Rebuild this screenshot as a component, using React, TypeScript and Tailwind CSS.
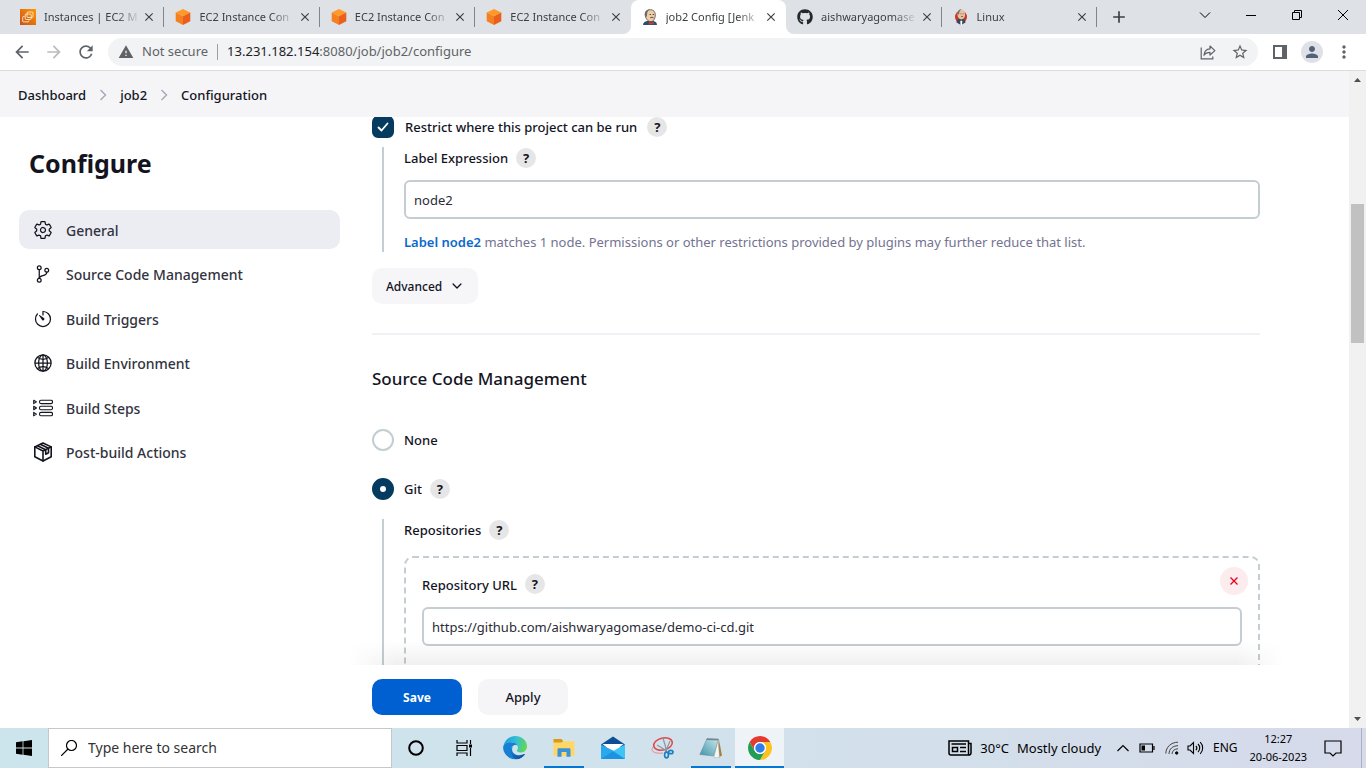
import React from "react";
import { FaGithub } from "react-icons/fa";
import {
  IoGitBranchOutline,
  IoGlobeOutline,
  IoSettingsOutline,
  IoTimerOutline,
  IoChevronDown,
} from "react-icons/io5";
import { MdArrowBack, MdArrowForward, MdRefresh, MdWarning, MdStarOutline, MdPerson, MdMoreVert, MdClose, MdAdd } from "react-icons/md";

/* ---------- Browser icons ---------- */

function Ec2Favicon() {
  return (
    <svg viewBox="0 0 16 16" className="size-4 shrink-0">
      <defs>
        <linearGradient id="ec2" x1="0" y1="1" x2="1" y2="0">
          <stop offset="0" stopColor="#c8511b" />
          <stop offset="1" stopColor="#ff9900" />
        </linearGradient>
      </defs>
      <rect width="16" height="16" fill="url(#ec2)" />
      <g fill="none" stroke="#ffe9d0" strokeWidth=".9">
        <rect x="7" y="3" width="6" height="5.500" rx="1" />
        <rect x="5.200" y="5" width="6" height="5.500" rx="1" />
        <path d="M4.500 7.500H3.300a.6.600 0 0 0-.6.600v4.200a.6.600 0 0 0 .6.600h4.900a.6.600 0 0 0 .6-.6V11.500" />
      </g>
    </svg>
  );
}

function CubeFavicon() {
  return (
    <svg viewBox="0 0 16 16" className="size-4 shrink-0">
      <path d="M8 0 15.300 3.600 8 7.300.7 3.600z" fill="#ff9a29" />
      <path d="M.7 3.600 8 7.300V16L.7 12.300z" fill="#f58021" />
      <path d="M15.300 3.600 8 7.300V16l7.300-3.700z" fill="#ea5f1b" />
    </svg>
  );
}

function JenkinsFavicon() {
  return (
    <svg viewBox="0 0 16 16" className="size-4 shrink-0">
      <path d="M1 16c0-2.600 2.300-3.800 5-4.300h5c2.600.7 4 2 4 4.300z" fill="#2f4f66" />
      <path d="M3.200 5.200C3.200 2 5.400.7 8.300.7c3.200 0 5 2 5 5.100 0 3.500-1.600 6.800-4.500 6.800-3.200 0-5.600-3.400-5.600-7.400z" fill="#eccdab" stroke="#5b4a40" strokeWidth=".8" />
      <path d="M3 6.500C2.300 3 4.300.6 7.800.4 5.800 1.700 5 3.300 5.100 5.600L4.700 8z" fill="#6e6a66" />
      <path d="M7.600 5.500h1.300M10.700 5.500h1.300M8.300 8.800c1-.6 2.300-.6 3.200.1" stroke="#3c2f28" strokeWidth=".9" fill="none" />
      <path d="m6.800 13 2.300.8 2.700-.8v2.600l-2.500-.7-2.500.9z" fill="#d33833" />
    </svg>
  );
}

function LinuxFavicon() {
  return (
    <svg viewBox="0 0 16 16" className="size-4 shrink-0">
      <ellipse cx="8" cy="8" rx="6" ry="6.500" fill="#c8372d" />
      <path d="M3.500 13.500c0-2.500 2-4 4.500-4s4.500 1.500 4.500 4L8 16z" fill="#34495c" />
      <ellipse cx="8.300" cy="5.500" rx="3.800" ry="5" fill="#e3c3a4" />
      <path d="M4.500 5C4.500 1.800 6 .3 8.500.3 6.700 1.500 6.300 3 6 5.500z" fill="#7a6b62" />
      <path d="m7.300 12 1-.4 1 .4L9 16H7.500z" fill="#fff" />
      <path d="M7.500 4.800h1M9.700 4.800h1M8 7.500h2" stroke="#6e5244" strokeWidth=".8" />
    </svg>
  );
}

const tabs = [
  { title: "Instances | EC2 M", icon: <Ec2Favicon /> },
  { title: "EC2 Instance Con", icon: <CubeFavicon /> },
  { title: "EC2 Instance Con", icon: <CubeFavicon /> },
  { title: "EC2 Instance Con", icon: <CubeFavicon /> },
  { title: "job2 Config [Jenk", icon: <JenkinsFavicon />, active: true },
  { title: "aishwaryagomase", icon: <FaGithub className="size-4 shrink-0 text-[#24292f]" /> },
  { title: "Linux", icon: <LinuxFavicon /> },
];

function TabStrip() {
  return (
    <div className="flex h-[34px] shrink-0 bg-[#dee1e6] pl-[9px] text-[11px] text-[#3c4043]">
      <div className="flex w-[1088px]">
        {tabs.map((tab, i) => {
          const divided = !tab.active && !tabs[i + 1]?.active;
          return (
            <div
              key={i}
              className={
                "flex min-w-0 flex-1 items-center pl-[11px] " + (tab.active ? "relative rounded-t-lg bg-white" : "")
              }
            >
              {tab.active && (
                <>
                  <svg viewBox="0 0 8 8" className="pointer-events-none absolute -left-2 bottom-0 size-2">
                    <path d="M0 8a8 8 0 0 0 8-8v8z" fill="#fff" />
                  </svg>
                  <svg viewBox="0 0 8 8" className="pointer-events-none absolute -right-2 bottom-0 size-2">
                    <path d="M8 8a8 8 0 0 1-8-8v8z" fill="#fff" />
                  </svg>
                </>
              )}
              {tab.icon}
              <span className="ml-2 min-w-0 flex-1 whitespace-nowrap [mask-image:linear-gradient(to_right,black_72px,transparent_96px)]">
                {tab.title}
              </span>
              <button aria-label="Close tab" className="mr-1.5 grid size-4 shrink-0 place-items-center">
                <MdClose className="size-3.5 text-[#3c4043]" />
              </button>
              <span className={divided ? "h-5 w-px bg-[#80868b]" : "h-5 w-px"} />
            </div>
          );
        })}
      </div>
      <button aria-label="New tab" className="ml-2.5 grid w-6 place-items-center">
        <MdAdd className="size-5" />
      </button>
      <div className="ml-auto flex h-[29px] items-center text-black">
        <button aria-label="Search tabs" className="grid w-[46px] place-items-center">
          <svg viewBox="0 0 12 8" className="h-2 w-3" fill="none" stroke="currentColor">
            <path d="M1 1.500 6 6.500l5-5" />
          </svg>
        </button>
        <button aria-label="Minimize" className="grid w-[46px] place-items-center">
          <svg viewBox="0 0 10 10" className="size-2.5" stroke="currentColor">
            <path d="M0 5.500h10" />
          </svg>
        </button>
        <button aria-label="Restore" className="grid w-[46px] place-items-center">
          <svg viewBox="0 0 10 10" className="size-2.5" fill="none" stroke="currentColor">
            <path d="M.5 2.500h7v7h-7zM2.500 2.500v-2h7v7h-2" />
          </svg>
        </button>
        <button aria-label="Close" className="grid w-[46px] place-items-center">
          <svg viewBox="0 0 10 10" className="size-2.5" stroke="currentColor">
            <path d="m0 0 10 10M10 0 0 10" />
          </svg>
        </button>
      </div>
    </div>
  );
}

function Toolbar() {
  return (
    <div className="flex h-[37px] shrink-0 items-center border-b border-[#dadce0] bg-white text-[#5f6368]">
      <button aria-label="Back" className="ml-3 grid size-5 place-items-center">
        <MdArrowBack className="size-5" />
      </button>
      <button aria-label="Forward" className="ml-3 grid size-5 place-items-center text-[#babcbe]">
        <MdArrowForward className="size-5" />
      </button>
      <button aria-label="Reload" className="ml-3 grid size-5 place-items-center">
        <MdRefresh className="size-5" />
      </button>
      <div className="ml-3 flex h-7 flex-1 items-center rounded-full bg-[#f1f3f4] pl-2.5 pr-2">
        <MdWarning className="size-4" />
        <span className="ml-2 text-[13px]">Not secure</span>
        <span className="mx-[9px] h-4 w-px bg-[#9aa0a6]" />
        <span className="flex-1 text-[13px]">
          <span className="text-[#202124]">13.231.182.154</span>:8080/job/job2/configure
        </span>
        <button aria-label="Share" className="grid size-5 place-items-center">
          <svg viewBox="0 0 16 16" className="size-4" fill="none" stroke="currentColor" strokeWidth="1.200">
            <path d="M1.200 3.500v11.300h11.600V12.500" />
            <path d="M4 11.300C4.300 7.500 6.500 5.100 10 4.900V2l4.900 4.600L10 11V8.300c-2.800 0-4.600.8-6 3z" strokeLinejoin="round" />
          </svg>
        </button>
        <button aria-label="Bookmark" className="ml-3 grid size-5 place-items-center">
          <MdStarOutline className="size-[18px]" />
        </button>
      </div>
      <button aria-label="Side panel" className="ml-3 grid size-5 place-items-center">
        <svg viewBox="0 0 14 14" className="size-3.5">
          <path d="M0 0h14v14H0zM2 2v10h7V2z" fill="currentColor" fillRule="evenodd" />
        </svg>
      </button>
      <button aria-label="Profile" className="ml-[11px] grid size-[22px] place-items-center rounded-full bg-[#dee1e6]">
        <MdPerson className="size-[18px] text-[#54617a]" />
      </button>
      <button aria-label="Menu" className="ml-[11px] mr-3 grid size-5 place-items-center">
        <MdMoreVert className="size-5" />
      </button>
    </div>
  );
}

/* ---------- Page ---------- */

function StepsIcon({ className }: { className?: string }) {
  return (
    <svg viewBox="0 0 20 20" className={className} fill="none" stroke="currentColor" strokeWidth="1.100" strokeLinejoin="round">
      <path d="M.7 2.200 3.500 3.900.7 5.600zM.7 8.300 3.500 10 .7 11.700zM.7 14.400l2.800 1.700-2.800 1.700z" />
      <rect x="6.500" y="2.200" width="13" height="3.400" rx="1.500" />
      <rect x="6.500" y="8.300" width="13" height="3.400" rx="1.500" />
      <rect x="6.500" y="14.400" width="13" height="3.400" rx="1.500" />
    </svg>
  );
}

function PackageIcon({ className }: { className?: string }) {
  return (
    <svg viewBox="0 0 20 20" className={className} fill="none" stroke="currentColor" strokeWidth="1.600" strokeLinejoin="round" strokeLinecap="round">
      <path d="M10 1 18.200 4.900v9.900L10 19l-8.200-4.200V4.900z" />
      <path d="M1.800 4.900 10 9l8.200-4.100M10 9v10" />
      <path d="m4.500 3.700 8.200 4v4.500l2.800-1.500V6.300L7.300 2.300" />
    </svg>
  );
}

const navItems = [
  { label: "General", Icon: IoSettingsOutline, active: true },
  { label: "Source Code Management", Icon: IoGitBranchOutline },
  { label: "Build Triggers", Icon: IoTimerOutline },
  { label: "Build Environment", Icon: IoGlobeOutline },
  { label: "Build Steps", Icon: StepsIcon },
  { label: "Post-build Actions", Icon: PackageIcon },
];

function Crumbs() {
  return (
    <nav className="flex h-[46px] shrink-0 items-center gap-3 bg-[#f5f5f8] pl-[18px] pt-1 text-[13px] font-medium text-[#14141f]">
      <a href="#dashboard">Dashboard</a>
      <CrumbArrow />
      <a href="#job2">job2</a>
      <CrumbArrow />
      <a href="#configuration">Configuration</a>
    </nav>
  );
}

function CrumbArrow() {
  return (
    <svg viewBox="0 0 10 12" className="mb-0.5 h-3 w-2.5" fill="none" stroke="#a6a6b8" strokeWidth="1.400">
      <path d="m2.500 1 5 5-5 5" />
    </svg>
  );
}

function Sidebar() {
  return (
    <aside className="w-[340px] shrink-0 pl-[19px] pt-[27px]">
      <h1 className="pl-2.5 text-[25px] font-bold leading-[38px] text-[#14141f]">Configure</h1>
      <nav className="mt-7 flex h-[262px] flex-col justify-between">
        {navItems.map(({ label, Icon, active }) => (
          <a
            key={label}
            href="#section"
            className={
              "flex h-[39px] items-center gap-[13px] rounded-[10px] pl-3.5 text-sm font-medium text-[#333340] " +
              (active ? "bg-[#ecedf3]" : "")
            }
          >
            <Icon className="size-5 text-[#14141f]" />
            <span className="pt-0.5">{label}</span>
          </a>
        ))}
      </nav>
    </aside>
  );
}

function Help({ topic }: { topic: string }) {
  return (
    <button
      aria-label={"Help for feature: " + topic}
      className="grid size-5 shrink-0 place-items-center rounded-full bg-[#e6e6e6] text-[13px] font-bold leading-5 text-[#14141f]"
    >
      ?
    </button>
  );
}

const textBox =
  "block h-[39px] w-full rounded-md border-2 border-[#c3cdd2] bg-white px-2 text-[13px] text-[#2b2b36] outline-none";

function RadioOption({ id, label, defaultChecked, help }: { id: string; label: string; defaultChecked?: boolean; help?: boolean }) {
  return (
    <div className="flex h-[22px] items-center">
      <input
        id={id}
        type="radio"
        name="scm"
        defaultChecked={defaultChecked}
        className="size-[22px] appearance-none rounded-full border-2 border-[#c3cdd2] bg-white checked:border-8 checked:border-[#043b5f]"
      />
      <label htmlFor={id} className="ml-2.5 mr-2 pt-0.5 text-[13px] font-medium">
        {label}
      </label>
      {help && <Help topic={label} />}
    </div>
  );
}

function Form() {
  return (
    <div className="min-h-0 flex-1 overflow-hidden text-[#14141f]">
      <div className="-mt-px flex h-[22px] items-center">
        <span className="grid size-[22px]">
          <input
            id="restrict"
            type="checkbox"
            defaultChecked
            className="peer size-[22px] appearance-none rounded-md border-2 border-[#c3cdd2] [grid-area:1/1] checked:border-[#043b5f] checked:bg-[#043b5f]"
          />
          <svg
            viewBox="0 0 12 10"
            className="pointer-events-none invisible h-2.5 w-3 place-self-center [grid-area:1/1] peer-checked:visible"
            fill="none"
            stroke="#fff"
            strokeWidth="1.800"
            strokeLinecap="round"
            strokeLinejoin="round"
          >
            <path d="m1.500 5.500 3 3 6-7" />
          </svg>
        </span>
        <label htmlFor="restrict" className="ml-[11px] mr-2.5 pt-0.5 text-[13px] font-medium">
          Restrict where this project can be run
        </label>
        <Help topic="Restrict where this project can be run" />
      </div>

      <div className="ml-2.5 mt-[9px] h-[105px] border-l-2 border-[#c3cdd2] pl-5">
        <div className="flex h-[22px] items-center gap-2">
          <label htmlFor="label-expression" className="pt-0.5 text-[13px] font-medium">
            Label Expression
          </label>
          <Help topic="Label Expression" />
        </div>
        <input id="label-expression" defaultValue="node2" className={"mt-[11px] " + textBox} />
        <p className="mt-[13px] text-[13px] leading-5 text-[#737390]">
          <a href="#label-node2" className="font-semibold text-[#0b6aca]">
            Label node2
          </a>{" "}
          matches 1 node. Permissions or other restrictions provided by plugins may further reduce that list.
        </p>
      </div>

      <button className="mt-4 flex h-9 items-center gap-2 rounded-[10px] bg-[#f6f6f9] px-3.5 text-xs font-medium">
        <span className="pt-0.5">Advanced</span>
        <IoChevronDown className="size-3.5" />
      </button>

      <hr className="mt-[29px] border-t-2 border-[#f0f0f5]" />

      <h2 className="mt-8 text-[17px] font-medium leading-6">Source Code Management</h2>

      <div className="mt-[38px] flex flex-col gap-[27px]">
        <RadioOption id="scm-none" label="None" />
        <RadioOption id="scm-git" label="Git" defaultChecked help />
      </div>

      <div className="ml-2.5 mt-[19px] border-l-2 border-[#c3cdd2] pl-5">
        <div className="flex h-[21px] items-center gap-2 text-[13px] font-medium">
          <span className="pt-0.5">Repositories</span>
          <Help topic="Repositories" />
        </div>
        <div className="mt-4 h-40 rounded-[9px] border-2 border-dashed border-[#c3cdd2] px-4 pt-[9px]">
          <div className="-mr-1.5 flex h-7 items-start justify-between">
            <div className="flex items-center gap-2 pt-1.5">
              <label htmlFor="repo-url" className="pt-0.5 text-[13px] font-medium leading-5">
                Repository URL
              </label>
              <Help topic="Repository URL" />
            </div>
            <button aria-label="Delete repository" className="grid size-7 place-items-center rounded-full bg-[#fdecee]">
              <svg viewBox="0 0 8 8" className="size-2" stroke="#e6001f" strokeWidth="1.300">
                <path d="m.5.500 7 7M7.500.500l-7 7" />
              </svg>
            </button>
          </div>
          <input id="repo-url" defaultValue="https://github.com/aishwaryagomase/demo-ci-cd.git" className={"mt-3 " + textBox} />
        </div>
      </div>
    </div>
  );
}

function ScrollBar() {
  return (
    <div className="flex w-[17px] shrink-0 flex-col items-center justify-between bg-[#f1f1f1]">
      <div className="flex w-full flex-col items-center">
        <svg viewBox="0 0 17 17" className="size-[17px]">
          <path d="M8.500 7 12 11H5z" fill="#505050" />
        </svg>
        <div className="mt-[116px] h-[139px] w-[13px] bg-[#c1c1c1]" />
      </div>
      <svg viewBox="0 0 17 17" className="size-[17px]">
        <path d="M8.500 10 12 6H5z" fill="#505050" />
      </svg>
    </div>
  );
}

/* ---------- Taskbar ---------- */

function EdgeIcon() {
  return (
    <svg viewBox="0 0 24 24" className="size-6">
      <defs>
        <linearGradient id="edge-top" x1="0" y1="0.300" x2="1" y2="0.500">
          <stop offset="0" stopColor="#1b9de2" />
          <stop offset=".55" stopColor="#35c1d0" />
          <stop offset="1" stopColor="#62d84e" />
        </linearGradient>
        <linearGradient id="edge-low" x1="0" y1="0" x2="1" y2="1">
          <stop offset="0" stopColor="#1683d8" />
          <stop offset="1" stopColor="#0b4a92" />
        </linearGradient>
      </defs>
      <path d="M.3 10.700C1.200 4.600 6 0 12 0c6.700 0 12 4.700 12 10.300 0 3.500-2.500 6.200-6.100 6.200-3 0-4.100-1.200-4.100-1.900 0-.6 1.100-.9 1.100-2.900C14.900 8.800 11.800 6.200 8 6.200c-3.700 0-6.300 1.500-7.700 4.500z" fill="url(#edge-top)" />
      <path d="M.1 12C.2 8.300 3.300 6.200 8 6.200c3.300 0 5.300 1.300 6.200 3-3.800-1.100-6 1.600-6 4.800 0 5.300 5.500 8.600 10.500 7.200A12 12 0 0 1 .1 12z" fill="#1580d4" />
      <path d="M9.900 10.300C6.500 12.200 7 20 12.500 23.100c3.500.8 7.500-1.400 9.400-4.500.3-.5-.1-.9-.6-.6-4.800 2.500-12.200.9-12.200-4.600 0-1.300.3-2.300.8-3.100z" fill="url(#edge-low)" />
    </svg>
  );
}

function ExplorerIcon() {
  return (
    <svg viewBox="0 0 22 20" className="h-5 w-[22px]">
      <path d="M.5 1h8l1.700 2.300H21.500V18H.5z" fill="#ffd768" />
      <path d="M.5 1h8l1.700 2.300L8.500 4.500H.5z" fill="#d99a16" />
      <path d="M4.500 18.700v-7.200c0-.8.500-1.300 1.300-1.300h10.400c.8 0 1.300.5 1.300 1.300v7.200h-4V14h-5v4.700z" fill="#3a93d6" />
    </svg>
  );
}

function MailIcon() {
  return (
    <svg viewBox="0 0 24 24" className="size-6">
      <path d="M0 8.500 12 .5l12 8-2 2.500H2z" fill="#0d4f94" />
      <path d="M1.500 8h21L12 17z" fill="#fff" />
      <path d="M0 8.500 13 15v8H0z" fill="#29a9ec" />
      <path d="M24 8.500 12 15 0 23h24z" fill="#3dc6f5" />
      <path d="m12 15 12 8H0z" fill="#1b93e0" />
    </svg>
  );
}

function SnipIcon() {
  return (
    <svg viewBox="0 0 24 24" className="size-6" fill="none">
      <ellipse cx="13" cy="8" rx="9.500" ry="6" stroke="#e2484d" strokeWidth="1.600" transform="rotate(-14 13 8)" />
      <path d="M3 11c-3 4 1 7 10 6" stroke="#e9888b" />
      <path d="m13 2 4 14M7 9l10 6M20 5l-5 12" stroke="#8b959e" strokeWidth="1.200" />
      <ellipse cx="16.500" cy="19" rx="1.900" ry="2.800" stroke="#1c7fc4" strokeWidth="1.700" />
      <ellipse cx="20.800" cy="16" rx="2.200" ry="1.700" stroke="#1c7fc4" strokeWidth="1.700" />
    </svg>
  );
}

function NotepadIcon() {
  return (
    <svg viewBox="0 0 24 24" className="size-6">
      <defs>
        <linearGradient id="note" x1="1" y1="0" x2="0" y2="1">
          <stop offset="0" stopColor="#cbe8ee" />
          <stop offset="1" stopColor="#3e93a8" />
        </linearGradient>
      </defs>
      <path d="m20 4 3 15.500-3.500 2L17 20z" fill="#a4803f" />
      <path d="m19 3 1.500 18.500-5.500.2L16 17z" fill="#f4f6f6" stroke="#99a" strokeWidth=".4" />
      <path d="M8 2.500 19.500 3 14.500 20 .8 18.500z" fill="url(#note)" stroke="#628894" strokeWidth=".5" />
      <path d="M8 2.500 19.500 3l-.3 1.500L7.300 4z" fill="#78868d" />
    </svg>
  );
}

function ChromeIcon() {
  return (
    <svg viewBox="0 0 24 24" className="size-6">
      <circle cx="12" cy="12" r="12" fill="#fff" />
      <path d="M1.610 6A12 12 0 0 1 22.390 6H12a6 6 0 0 0-5.200 9z" fill="#e33b2e" />
      <path d="M22.390 6A12 12 0 0 1 12 24l5.200-9A6 6 0 0 0 12 6z" fill="#fcc31e" />
      <path d="M1.610 6A12 12 0 0 0 12 24l5.200-9a6 6 0 0 1-10.400 0z" fill="#239d53" />
      <circle cx="12" cy="12" r="6" fill="#fff" />
      <circle cx="12" cy="12" r="4.700" fill="#2f7de9" />
    </svg>
  );
}

const apps = [
  { name: "Microsoft Edge", Icon: EdgeIcon },
  { name: "File Explorer", Icon: ExplorerIcon, open: true },
  { name: "Mail", Icon: MailIcon },
  { name: "Snipping Tool", Icon: SnipIcon },
  { name: "Notepad", Icon: NotepadIcon, open: true },
  { name: "Google Chrome", Icon: ChromeIcon, current: true },
];

function Taskbar() {
  return (
    <footer className="flex h-10 shrink-0 bg-linear-to-r from-[#cce5ed] via-[#d1e2ec] to-[#d6daea] text-black">
      <button aria-label="Start" className="grid w-12 place-items-center">
        <svg viewBox="0 0 16 16" className="size-4">
          <path d="M0 2.200 6.600 1.300v6.200H0zM7.400 1.200 16 0v7.500H7.400zM0 8.400h6.600v6.300L0 13.800zM7.400 8.400H16V16l-8.600-1.200z" />
        </svg>
      </button>
      <label className="flex w-[344px] items-center border border-[#c4c8ca] bg-white pl-3">
        <svg viewBox="0 0 16 16" className="size-4 shrink-0" fill="none" stroke="#000" strokeWidth="1.200">
          <circle cx="10.500" cy="5.500" r="5" />
          <path d="M7 9 0 16" />
        </svg>
        <input
          aria-label="Search"
          placeholder="Type here to search"
          className="ml-[11px] min-w-0 flex-1 bg-transparent text-sm outline-none placeholder:text-[#333]"
        />
      </label>
      <button aria-label="Cortana" className="grid w-12 place-items-center">
        <svg viewBox="0 0 16 16" className="size-4" fill="none" stroke="#000" strokeWidth="2">
          <circle cx="8" cy="8" r="6.800" />
        </svg>
      </button>
      <button aria-label="Task view" className="grid w-[50px] place-items-center pr-0.5">
        <svg viewBox="0 0 17 16" className="h-4 w-[17px]" fill="none" stroke="#000" strokeWidth="1.200">
          <path d="M1 0v3h10V0M1 16v-3h10v3M1 5.500h10v5H1zM14.500 0v4M14.500 8v8" />
          <path d="M13 4.500h3v3h-3z" fill="#000" stroke="none" />
        </svg>
      </button>
      {apps.map(({ name, Icon, open, current }) => (
        <button
          key={name}
          aria-label={name}
          className={
            "flex w-[49px] flex-col items-center justify-between " + (current ? "bg-[#eef3f8]" : "")
          }
        >
          <span className="grid h-[38px] w-full place-items-center pt-0.5">
            <Icon />
          </span>
          {(open || current) && (
            <span className={current ? "h-0.5 w-full bg-[#0078d7]" : "h-0.5 w-10 bg-[#0078d7]"} />
          )}
        </button>
      ))}

      <div className="ml-auto flex items-center">
        <svg viewBox="0 0 24 16" className="h-4 w-6" fill="none" stroke="#000" strokeWidth="1.500">
          <path d="M3 1h17.500v14H3A2 2 0 0 1 1 13V1zM20.500 3.500H23V13a2 2 0 0 1-2.500 2" />
          <path d="M3.500 4h14.500M12 7.500h6M12 11.500h6M4.500 7.500h5v4h-5z" />
        </svg>
        <span className="ml-2 pt-0.5 text-[13px]">30°C</span>
        <span className="ml-2 pt-0.5 text-[13px]">Mostly cloudy</span>
        <svg viewBox="0 0 12 8" className="ml-4 h-2 w-3" fill="none" stroke="#000" strokeWidth="1.200">
          <path d="m.5 7 5.500-5.500L11.500 7" />
        </svg>
        <svg viewBox="0 0 16 10" className="ml-2.5 h-2.5 w-4" fill="none" stroke="#000" strokeWidth="1.200">
          <path d="M1 1h12.500v8H1zM15 3v4" />
          <path d="M2.500 2.500H6v5H2.500z" fill="#000" stroke="none" />
        </svg>
        <svg viewBox="0 0 14 14" className="ml-2.5 size-3.5" fill="none" stroke="#000">
          <path d="M.8 12.500C1 6 6 1.300 13 1.200M4 13c.2-5 3.500-8.200 9-8.300M7 13c.2-3.200 2.300-5 6-5.200" stroke="#444" />
          <circle cx="11.700" cy="12" r="1.200" fill="#000" />
        </svg>
        <svg viewBox="0 0 17 14" className="ml-2 h-3.5 w-[17px]" fill="none" stroke="#000" strokeWidth="1.100">
          <path d="M1 5h2l3.500-3.500v11L3 9H1zM8.800 4.800c1.200 1.200 1.200 3.200 0 4.400M11 3c2.300 2.300 2.300 5.700 0 8M13.200 1.200c3.300 3.300 3.300 8.300 0 11.600" />
        </svg>
        <span className="ml-[9px] text-xs">ENG</span>
        <div className="ml-3 text-center text-[11px] leading-[18px]">
          <div>12:27</div>
          <div>20-06-2023</div>
        </div>
        <svg viewBox="0 0 18 17" className="ml-[17px] h-[17px] w-[18px]" fill="none" stroke="#000" strokeWidth="1.200">
          <path d="M1 1h16v12h-5l-3 3-3-3H1z" />
        </svg>
        <span className="ml-[19px] mr-1 h-10 w-px bg-[#a9b2bd]" />
      </div>
    </footer>
  );
}

export default function App() {
  return (
    <div className="flex h-screen flex-col overflow-hidden bg-white font-['Noto_Sans','Open_Sans',sans-serif]">
      <TabStrip />
      <Toolbar />
      <div className="flex min-h-0 flex-1">
        <div className="flex min-w-0 flex-1 flex-col">
          <Crumbs />
          <div className="flex min-h-0 flex-1">
            <Sidebar />
            <main className="flex min-w-0 flex-1 flex-col pl-8 pr-[89px]">
              <Form />
              <div className="relative flex h-[63px] shrink-0 items-center gap-4 bg-white pt-px">
                <div className="pointer-events-none absolute -inset-x-6 bottom-full h-6 bg-linear-to-t from-black/6 to-transparent [mask-image:linear-gradient(to_right,transparent,black_48px,black_calc(100%-48px),transparent)]" />
                <button className="h-9 w-[90px] rounded-[10px] bg-[#0060d1] pt-px text-xs font-bold text-white">Save</button>
                <button className="h-9 w-[90px] rounded-[10px] bg-[#f5f5f8] pt-px text-[13px] font-medium text-[#14141f]">Apply</button>
              </div>
            </main>
          </div>
        </div>
        <ScrollBar />
      </div>
      <Taskbar />
    </div>
  );
}
